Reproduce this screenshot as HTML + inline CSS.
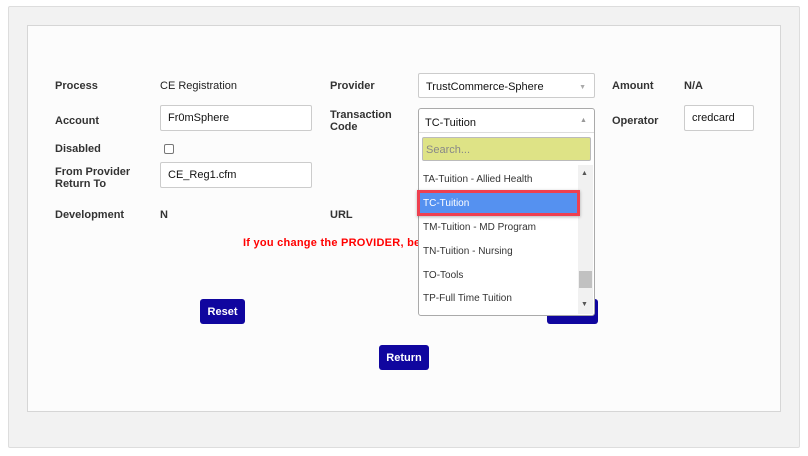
<!DOCTYPE html>
<html><head><style>
*{box-sizing:border-box;margin:0;padding:0}
body{width:808px;height:456px;background:#fff;font-family:"Liberation Sans",sans-serif;font-size:11px;color:#333;position:relative;overflow:hidden}
.a{position:absolute}
.outer{left:8px;top:6px;width:792px;height:442px;background:#f2f2f2;border:1px solid #ddd;border-radius:2px}
.inner{left:27px;top:25px;width:754px;height:387px;background:#fcfcfc;border:1px solid #d6d6d6}
.l{font-weight:bold;color:#333;line-height:12px}
.inp{background:#fff;border:1px solid #ccc;border-radius:2px;padding-left:7px;font-size:11px;color:#111;line-height:24px}
.btn{background:#10069f;color:#fff;font-weight:bold;border-radius:3px;display:flex;align-items:center;justify-content:center;font-size:11px}
.it{left:423px;font-size:10px;color:#333}
</style></head><body>
<div class="a outer"></div>
<div class="a inner"></div>
<div class="a l" style="left:55px;top:80px">Process</div>
<div class="a l" style="left:160px;top:80px;font-weight:normal;color:#222">CE Registration</div>
<div class="a l" style="left:330px;top:80px">Provider</div>
<div class="a inp" style="left:418px;top:73px;width:177px;height:25px;line-height:27px">TrustCommerce-Sphere<span style="position:absolute;right:8px;top:0;font-size:7px;color:#aaa">▼</span></div>
<div class="a l" style="left:612px;top:80px">Amount</div>
<div class="a l" style="left:684px;top:80px">N/A</div>

<div class="a l" style="left:55px;top:115px">Account</div>
<div class="a inp" style="left:160px;top:105px;width:152px;height:26px">Fr0mSphere</div>
<div class="a l" style="left:330px;top:109px">Transaction<br>Code</div>
<div class="a l" style="left:612px;top:115px">Operator</div>
<div class="a inp" style="left:684px;top:105px;width:70px;height:26px">credcard</div>

<div class="a l" style="left:55px;top:143px">Disabled</div>
<div class="a" style="left:164px;top:144px;width:10px;height:10px;border:1px solid #777;border-radius:2px;background:#fff"></div>
<div class="a l" style="left:55px;top:166px">From Provider<br>Return To</div>
<div class="a inp" style="left:160px;top:162px;width:152px;height:26px">CE_Reg1.cfm</div>

<div class="a l" style="left:55px;top:209px">Development</div>
<div class="a l" style="left:160px;top:209px">N</div>
<div class="a l" style="left:330px;top:209px">URL</div>
<div class="a" style="left:243px;top:237px;color:#f00;font-weight:bold;font-size:11px;letter-spacing:0.25px;white-space:nowrap">If you change the PROVIDER, be sure</div>

<div class="a btn" style="left:200px;top:299px;width:45px;height:25px">Reset</div>
<div class="a btn" style="left:547px;top:299px;width:51px;height:25px"></div>
<div class="a btn" style="left:379px;top:345px;width:50px;height:25px">Return</div>

<div class="a" style="left:418px;top:108px;width:177px;height:208px;background:#fff;border:1px solid #aaa;border-radius:3px"></div>
<div class="a" style="left:425px;top:117px;font-size:11px;color:#111">TC-Tuition</div>
<div class="a" style="left:580px;top:117px;font-size:7px;color:#999">▲</div>
<div class="a" style="left:419px;top:132px;width:175px;border-top:1px solid #ddd"></div>
<div class="a" style="left:422px;top:137px;width:169px;height:24px;background:#dee386;border:1px solid #bbb;border-radius:2px;padding:6px 0 0 3px;color:#888;font-size:11px">Search...</div>
<div class="a" style="left:578px;top:165px;width:15px;height:149px;background:#f1f1f1"></div>
<div class="a" style="left:579px;top:271px;width:13px;height:17px;background:#c1c1c1"></div>
<div class="a" style="left:581px;top:170px;font-size:7px;color:#555">▲</div>
<div class="a" style="left:581px;top:301px;font-size:7px;color:#555">▼</div>
<div class="a it" style="top:174px">TA-Tuition - Allied Health</div>
<div class="a" style="left:417px;top:190px;width:163px;height:26px;border:3px solid #ee4050;background:#5591f0;box-shadow:0 1px 3px rgba(0,0,0,.3)"></div>
<div class="a it" style="top:198px;color:#fff">TC-Tuition</div>
<div class="a it" style="top:222px">TM-Tuition - MD Program</div>
<div class="a it" style="top:246px">TN-Tuition - Nursing</div>
<div class="a it" style="top:270px">TO-Tools</div>
<div class="a it" style="top:293px">TP-Full Time Tuition</div>
</body></html>
